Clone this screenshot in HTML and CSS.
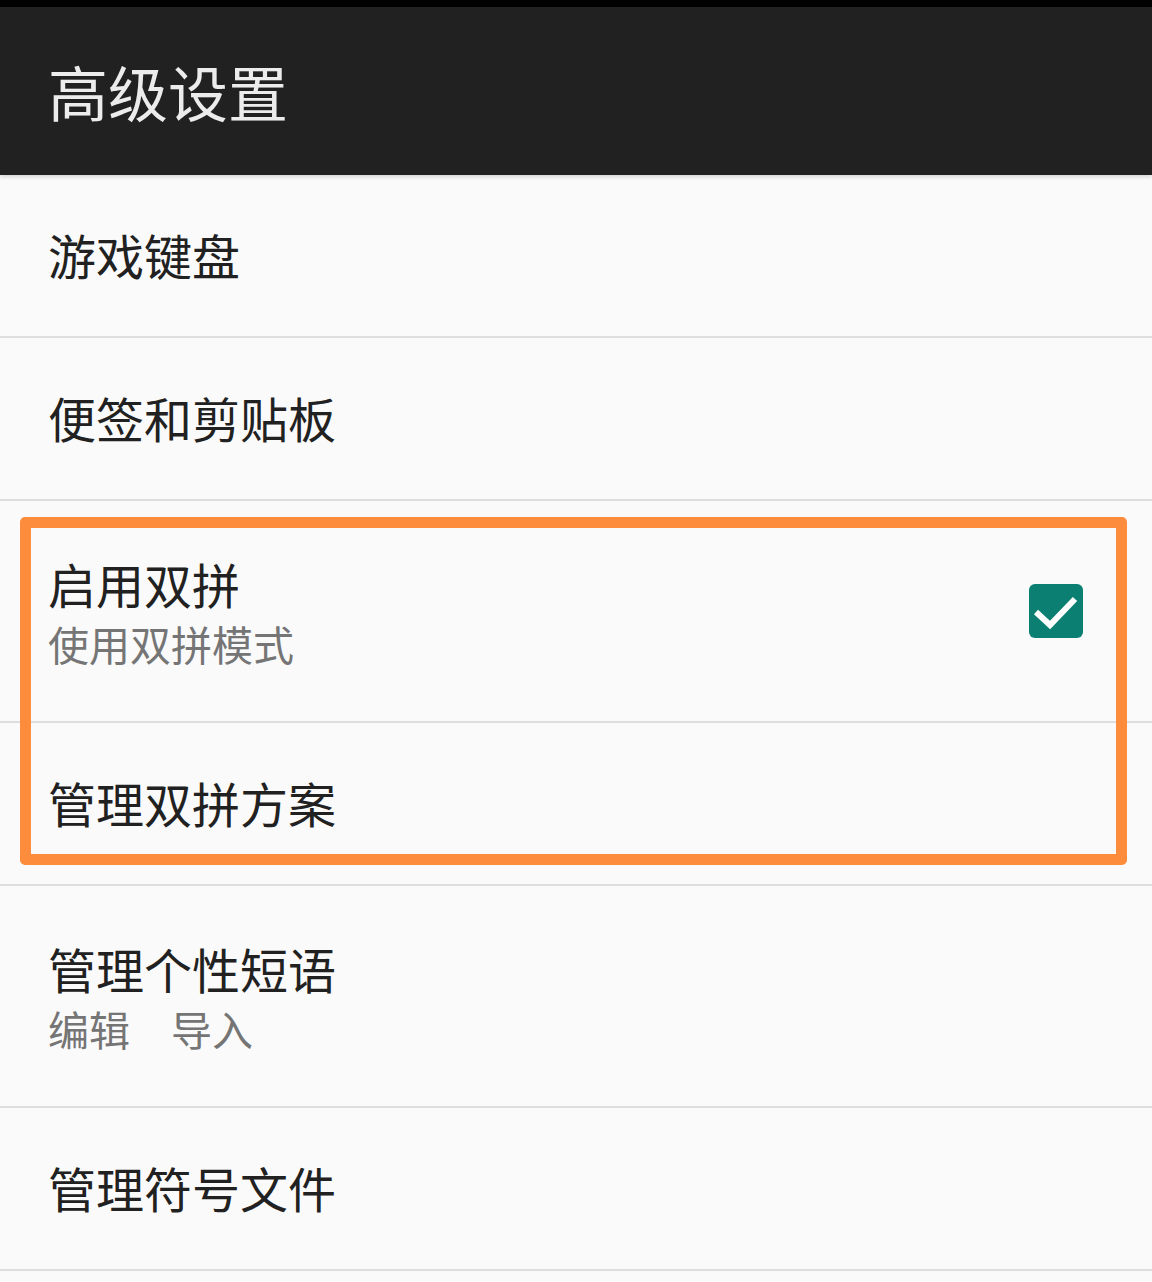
FILE: index.html
```html
<!DOCTYPE html>
<html lang="zh-cn">

<head>
  <meta charset="UTF-8" />
  <meta name="viewport" content="width=device-width, initial-scale=1.0" />
  <title>高级设置</title>
  <link rel="stylesheet" href="styles.css">
</head>

<body>
  <header class="toolbar">
    <h1 class="toolbar-title">高级设置</h1>
  </header>

  <div class="pref-list">
    <div class="pref">
      <div class="pref-text">
        <div class="pref-title">游戏键盘</div>
      </div>
    </div>
    <div class="pref">
      <div class="pref-text">
        <div class="pref-title">便签和剪贴板</div>
      </div>
    </div>

    <div class="pref-group">
      <div class="pref pref-tall">
        <div class="pref-text">
          <div class="pref-title">启用双拼</div>
          <div class="pref-summary">使用双拼模式</div>
        </div>
        <span class="checkbox">
          <svg width="54" height="54" viewBox="0 0 54 54">
            <path d="M7 28 L21 41 L46 15" fill="none" stroke="#fff" stroke-width="6" />
          </svg>
        </span>
      </div>
      <div class="pref">
        <div class="pref-text">
          <div class="pref-title">管理双拼方案</div>
        </div>
      </div>
      <!-- 标注框 -->
      <div class="highlight"></div>
    </div>

    <div class="pref pref-tall">
      <div class="pref-text">
        <div class="pref-title">管理个性短语</div>
        <div class="pref-summary">编辑　导入</div>
      </div>
    </div>
    <div class="pref">
      <div class="pref-text">
        <div class="pref-title">管理符号文件</div>
      </div>
    </div>
  </div>
</body>

</html>
```

FILE: styles.css
```css
body {
  margin: 0;
  background-color: #fafafa;
  font-family: "Noto Sans CJK SC", "Noto Sans", sans-serif;
}

.toolbar {
  height: 168px;
  border-top: 7px solid #000;
  background-color: #212121;
  display: flex;
  align-items: center;
  padding-left: 48px;
  box-shadow: 0 2px 4px rgba(0, 0, 0, 0.15);
  position: relative;
  z-index: 2;
}

.toolbar-title {
  margin: 0;
  font-size: 60px;
  font-weight: normal;
  color: #ececec;
  line-height: 1;
}

.pref {
  display: flex;
  align-items: center;
  height: 161px;
  padding: 0 69px 0 48px;
  border-bottom: 2px solid #dedede;
}

.pref-tall {
  height: 220px;
}

.pref-text {
  flex: 1;
  padding-bottom: 4px;
}

.pref-tall .pref-text {
  padding-bottom: 0;
  padding-top: 4px;
}

.pref-title {
  font-size: 48px;
  line-height: 60px;
  color: #212121;
}

.pref-summary {
  font-size: 41px;
  line-height: 60px;
  color: #757575;
}

.checkbox {
  width: 54px;
  height: 54px;
  border-radius: 6px;
  background-color: #0b7f71;
  display: flex;
}

.pref-group {
  position: relative;
}

.highlight {
  position: absolute;
  top: 16px;
  left: 20px;
  right: 25px;
  bottom: 21px;
  border: 11px solid #fd8c3c;
  border-radius: 5px;
  pointer-events: none;
}
```
